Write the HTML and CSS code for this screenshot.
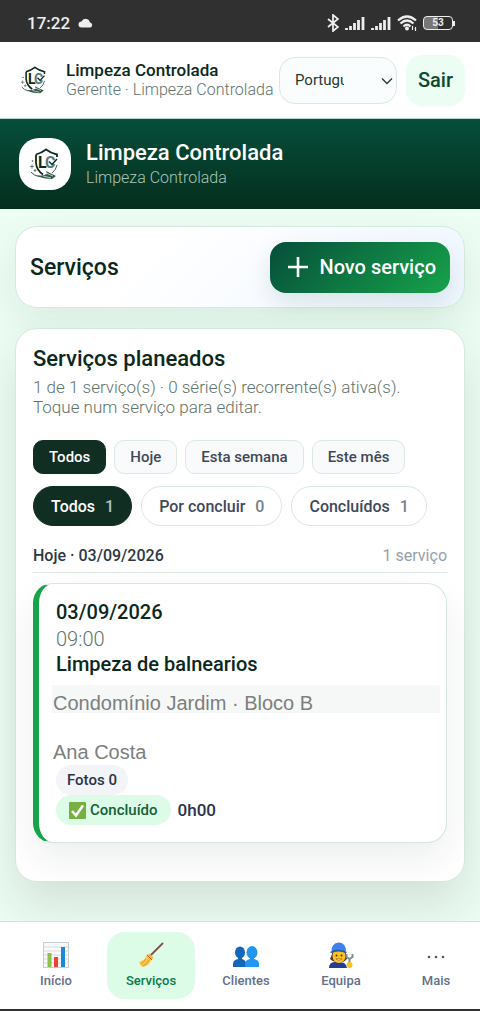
FILE: index.html
```
<!DOCTYPE html>
<html lang="pt">
<head>
	<meta charset="utf-8">
	<meta name="viewport" content="width=device-width, initial-scale=1">
	<title>Limpeza Controlada</title>
	<link rel="stylesheet" href="styles.css">
</head>
<body>
	<div class="status">
		<span class="time">17:22</span>
		<svg width="16" height="10" viewBox="0 0 16 10"><path d="M3.500 9.500a3 3 0 0 1 0-6A4.500 4.500 0 0 1 12 4.500a2.600 2.600 0 0 1 .5 5z" fill="#eee"/></svg>
		<div class="status-icons">
			<svg width="12" height="18" viewBox="0 0 12 18"><path d="M1 5l10 8-5 4V1l5 4L1 13" fill="none" stroke="#eee" stroke-width="1.800"/></svg>
			<svg width="20" height="14" viewBox="0 0 20 14"><path d="M1.500 14v-2M5.500 14v-4M9.500 14V7M13.500 14V4M18 14V1" stroke="#eee" stroke-width="2.800"/></svg>
			<svg width="20" height="14" viewBox="0 0 20 14"><path d="M1.500 14v-2M5.500 14v-4M9.500 14V7M13.500 14V4M18 14V1" stroke="#eee" stroke-width="2.800"/></svg>
			<svg width="20" height="16" viewBox="0 0 20 16"><path d="M1 5.500q9-8 18 0M3.500 8.500q6.500-6 13 0M6.500 11.500q3.500-3.500 7 0" fill="none" stroke="#eee" stroke-width="2.200"/><circle cx="10" cy="13.500" r="2" fill="#eee"/><path d="M15.500 11v4M18.500 12v4" stroke="#eee" stroke-width="1.200"/></svg>
			<span class="battery">53</span>
		</div>
	</div>

	<header class="topbar">
		<svg class="topbar-logo" width="28" height="30" viewBox="0 0 32 34">
			<path d="M7 7.500Q12.500 6 17 2.500Q21.500 6 28 7.500V10M7 7.500V16Q7.500 23 14 27.500" fill="none" stroke="#0d2b20" stroke-width="1.800"/>
			<text x="9" y="21">L<tspan class="logo-c" x="16">C</tspan></text>
			<path d="M20 14.500l3 3 5-5.500" fill="none" stroke="#0d2b20" stroke-width="1.500"/>
			<path d="M28 18Q27 23 23 26M2 25Q8 32 17 28" fill="none" stroke="#33584a"/>
			<path d="M7 28Q13 30 18 27L17 24L27 29L23 32Q13 32 7 28Z" fill="#33584a"/>
			<path d="M17 26l7 3M14 29l8 2" stroke="#fff" stroke-width=".7"/>
			<path d="M3 17.500v4M1 19.500h4M6 22v3M4.500 23.500h3" stroke="#33584a" stroke-width=".7"/>
			<circle cx="3.500" cy="14" r=".8" fill="#33584a"/>
		</svg>
		<div class="topbar-text">
			<strong>Limpeza Controlada</strong>
			<span>Gerente · Limpeza Controlada</span>
		</div>
		<div class="lang">
			<select aria-label="Idioma">
				<option>Português</option>
				<option>English</option>
			</select>
			<svg width="12" height="8" viewBox="0 0 12 8"><path d="M1 1.500l5 5 5-5" fill="none" stroke="#24372f" stroke-width="1.300"/></svg>
		</div>
		<button class="logout" type="button">Sair</button>
	</header>

	<section class="hero">
		<div class="hero-logo">
			<svg width="32" height="34" viewBox="0 0 32 34">
				<path d="M7 7.500Q12.500 6 17 2.500Q21.500 6 28 7.500V10M7 7.500V16Q7.500 23 14 27.500" fill="none" stroke="#0d2b20" stroke-width="1.800"/>
				<text x="9" y="21">L<tspan class="logo-c" x="16">C</tspan></text>
				<path d="M20 14.500l3 3 5-5.500" fill="none" stroke="#0d2b20" stroke-width="1.500"/>
				<path d="M28 18Q27 23 23 26M2 25Q8 32 17 28" fill="none" stroke="#33584a"/>
				<path d="M7 28Q13 30 18 27L17 24L27 29L23 32Q13 32 7 28Z" fill="#33584a"/>
				<path d="M17 26l7 3M14 29l8 2" stroke="#fff" stroke-width=".7"/>
				<path d="M3 17.500v4M1 19.500h4M6 22v3M4.500 23.500h3" stroke="#33584a" stroke-width=".7"/>
				<circle cx="3.500" cy="14" r=".8" fill="#33584a"/>
			</svg>
		</div>
		<div class="hero-text">
			<h1>Limpeza Controlada</h1>
			<p>Limpeza Controlada</p>
		</div>
	</section>

	<main>
		<section class="card title-card">
			<h2>Serviços</h2>
			<button class="new-btn" type="button">
				<svg width="20" height="20" viewBox="0 0 20 20"><path d="M10 0v20M0 10h20" stroke="#fff" stroke-width="2.600"/></svg>
				Novo serviço
			</button>
		</section>

		<section class="card list-card">
			<h3>Serviços planeados</h3>
			<p class="summary">1 de 1 serviço(s) · 0 série(s) recorrente(s) ativa(s). Toque num serviço para editar.</p>

			<div class="periods">
				<button class="active" type="button">Todos</button>
				<button type="button">Hoje</button>
				<button type="button">Esta semana</button>
				<button type="button">Este mês</button>
			</div>
			<div class="states">
				<button class="active" type="button">Todos <span>1</span></button>
				<button type="button">Por concluir <span>0</span></button>
				<button type="button">Concluídos <span>1</span></button>
			</div>

			<div class="day">
				<strong>Hoje · 03/09/2026</strong>
				<span>1 serviço</span>
			</div>

			<article class="service">
				<div class="date">03/09/2026</div>
				<div class="hour">09:00</div>
				<div class="name">Limpeza de balnearios</div>
				<div class="place">Condomínio Jardim · Bloco B</div>
				<div class="person">Ana Costa</div>
				<div class="tag-row"><span class="tag">Fotos 0</span></div>
				<div class="tag-row">
					<span class="tag done">
						<svg width="17" height="17" viewBox="0 0 17 17"><rect width="17" height="17" rx="1" fill="#76b043"/><path d="M3 9l4 4.500L14 3.500" fill="none" stroke="#fff" stroke-width="2.500"/></svg>
						Concluído
					</span>
					<span class="duration">0h00</span>
				</div>
			</article>
		</section>
	</main>

	<nav class="tabs">
		<a href="#inicio">
			<svg width="26" height="26" viewBox="0 0 26 26"><rect x=".5" y=".5" width="25" height="25" fill="#fafafa" stroke="#c5cdd0"/><path d="M1 5h24M1 9h24M1 13h24M1 17h24M1 21h24" stroke="#d5dcdf"/><path d="M6.500 11v14" stroke="#8bc34a" stroke-width="4"/><path d="M13 15v10" stroke="#f44336" stroke-width="4"/><path d="M20 5v20" stroke="#1e88d2" stroke-width="4"/></svg>
			Início
		</a>
		<a class="active" href="#servicos">
			<svg width="26" height="26" viewBox="0 0 26 26"><path d="M12 14L25 1" stroke="#795548" stroke-width="1.800"/><path d="M8.500 13.500l5 5Q11 24 4.500 25Q1.500 23 1 20Q7 18 8.500 13.500z" fill="#fdc84b"/><path d="M8.500 13.500l3-2 4 4-2 3z" fill="#f9bd3b"/><path d="M9 13l5 5" stroke="#d84b35"/><path d="M8 17Q6 20 3 22M11 18Q9 22 5 24" fill="none" stroke="#d99324"/></svg>
			Serviços
		</a>
		<a href="#clientes">
			<svg width="26" height="26" viewBox="0 0 26 26"><ellipse cx="7" cy="10.500" rx="5" ry="6" fill="#1565b8"/><path d="M0 25v-3q0-4 5-5v-2h4v2q4 1 4 5v3z" fill="#1565b8"/><ellipse cx="19" cy="10.500" rx="5.500" ry="6.500" fill="#2196f3"/><path d="M12 25v-3q0-4 5-5v-2h4v2q5 1 5 5v3z" fill="#2196f3"/></svg>
			Clientes
		</a>
		<a href="#equipa">
			<svg width="26" height="26" viewBox="0 0 26 26"><path d="M5 8q-1 5-3 9 3 3 8 3h5q4-2 4-4l-2-8z" fill="#543930"/><path d="M1 26q0-6 6-6h5q6 0 7 6z" fill="#243c91"/><ellipse cx="11" cy="14" rx="6.500" ry="7" fill="#fdc21b"/><path d="M3.500 10Q3 1 11 .5q7 .5 7 9Q10 6 3.500 10z" fill="#3d82e8"/><path d="M2 10Q10 5 19 10L18 11Q10 8 3 11z" fill="#205bb5"/><circle cx="8.500" cy="13.500" r="1" fill="#402d20"/><circle cx="13.500" cy="13.500" r="1" fill="#402d20"/><path d="M8 17q3 3 6 0z" fill="#fff" stroke="#713b20" stroke-width=".5"/><path d="M18.500 12v3l3 2 3-2v-3M21.500 17v8" fill="none" stroke="#78909c" stroke-width="2"/><circle cx="21.500" cy="23" r="3" fill="#fdc21b"/></svg>
			Equipa
		</a>
		<a href="#mais">
			<svg width="26" height="26" viewBox="0 0 26 26"><g fill="#505a65"><circle cx="6" cy="15" r="1.300"/><circle cx="13" cy="15" r="1.300"/><circle cx="20" cy="15" r="1.300"/></g></svg>
			Mais
		</a>
	</nav>
</body>
</html>
```
FILE: styles.css
```
* {
	margin: 0;
	padding: 0;
	box-sizing: border-box;
}
body {
	display: flex;
	flex-direction: column;
	min-height: 100vh;
	background: #ecfdf3;
	color: #0b281d;
	font-family: Roboto, "Liberation Sans", sans-serif;
}
button, select {
	border: 0;
	font-family: inherit;
	cursor: pointer;
}
svg {
	flex: none;
}
svg text {
	font-size: 16px;
	font-weight: 700;
	fill: #0d2b20;
}
svg .logo-c {
	fill: #5d7c70;
}
h1, h2, h3, strong {
	font-weight: 500;
}

.status {
	display: flex;
	align-items: center;
	height: 42px;
	padding: 3px 27px 0;
	background: #303030;
	color: #eee;
}
.time {
	margin-right: 8px;
	font-size: 17px;
	font-weight: 500;
}
.status-icons {
	display: flex;
	align-items: center;
	gap: 6px;
	margin-left: auto;
}
.battery {
	position: relative;
	width: 30px;
	border: 1px solid #eee;
	border-radius: 4px;
	background: linear-gradient(90deg, #777 50%, #303030 50%);
	font-size: 10px;
	font-weight: 700;
	line-height: 12px;
	text-align: center;
}
.battery::after {
	content: "";
	position: absolute;
	top: 4px;
	right: -3px;
	width: 2px;
	height: 5px;
	background: #eee;
}

.topbar {
	display: flex;
	align-items: center;
	height: 77px;
	padding: 0 15px 0 20px;
	border-bottom: 1px solid #b5d9c8;
	background: #fff;
}
.topbar-logo {
	margin-right: 18px;
}
.topbar-text {
	flex: 1;
	min-width: 0;
	white-space: nowrap;
	line-height: 20px;
}
.topbar-text strong, .topbar-text span {
	display: block;
}
.topbar-text strong {
	font-size: 17px;
}
.topbar-text span {
	color: #60736b;
	font-size: 16px;
	font-weight: 300;
}
.lang {
	position: relative;
	margin-right: 9px;
}
.lang select {
	display: block;
	width: 118px;
	height: 47px;
	padding: 0 52px 0 15px;
	border: 1px solid #dce7e2;
	border-radius: 16px;
	background: #f9fdfe;
	color: #24372f;
	font-size: 15px;
	appearance: none;
}
.lang svg {
	position: absolute;
	top: 20px;
	right: 4px;
	pointer-events: none;
}
.logout {
	width: 59px;
	height: 51px;
	border-radius: 16px;
	background: #ecfdf3;
	color: #0a4a33;
	font-size: 20px;
	font-weight: 500;
}

.hero {
	display: flex;
	align-items: center;
	gap: 15px;
	height: 90px;
	padding: 0 19px;
	background: linear-gradient(#064e3b, #052e1d);
	color: #fff;
}
.hero-logo {
	display: flex;
	align-items: center;
	justify-content: center;
	width: 52px;
	height: 52px;
	border-radius: 20px;
	background: #fff;
}
.hero-text {
	padding-top: 2px;
}
.hero h1 {
	font-size: 22px;
	line-height: 26px;
}
.hero p {
	color: #a9c7ba;
	font-size: 16px;
	font-weight: 300;
	line-height: 24px;
}

main {
	flex: 1;
	padding: 17px 15px 39px;
	overflow: hidden;
}
.card {
	border: 1px solid #d5eadf;
	border-radius: 22px;
	background: #fff;
	box-shadow: 0 16px 40px rgba(20, 60, 35, .08);
}
.title-card {
	display: flex;
	align-items: center;
	justify-content: space-between;
	height: 82px;
	margin-bottom: 20px;
	padding: 0 14px;
	background: linear-gradient(135deg, #fff 30%, #eff6ff);
}
.title-card h2 {
	font-size: 23px;
}
.new-btn {
	display: flex;
	align-items: center;
	gap: 11px;
	height: 51px;
	padding: 0 14px 0 18px;
	border-radius: 16px;
	background: linear-gradient(135deg, #064e3b, #16a34a);
	box-shadow: 0 10px 24px rgba(6, 78, 59, .12);
	color: #fff;
	font-size: 20px;
	font-weight: 500;
}

.list-card {
	padding: 16px 17px 38px;
	box-shadow: 0 24px 48px rgba(30, 35, 32, .12);
}
.list-card h3 {
	margin-bottom: 5px;
	font-size: 22px;
	line-height: 27px;
}
.summary {
	color: #60736b;
	font-size: 17px;
	font-weight: 300;
	line-height: 20px;
}
.periods, .states {
	display: flex;
}
.periods {
	gap: 8px;
	margin: 23px 0 12px;
}
.periods button, .states button {
	border: 1px solid #dce8e2;
	color: #3f4858;
	font-weight: 500;
	white-space: nowrap;
}
.periods button {
	height: 34px;
	padding: 0 15px;
	border-radius: 10px;
	background: #f8fafc;
	font-size: 15px;
}
.states {
	gap: 9px;
}
.states button {
	height: 40px;
	padding: 0 17px;
	border-radius: 20px;
	background: #fff;
	font-size: 16px;
}
.states span {
	margin-left: 6px;
	opacity: .7;
}
.periods .active, .states .active {
	border-color: #102e22;
	background: #102e22;
	color: #fff;
}
.day {
	display: flex;
	justify-content: space-between;
	margin: 19px 0 10px;
	padding-bottom: 5px;
	border-bottom: 1px solid #dfe7e5;
	color: #2c3846;
	font-size: 16px;
	line-height: 22px;
}
.day span {
	color: #94a0ae;
}

.service {
	padding: 16px 6px 17px 17px;
	border: 1px solid #d5e6df;
	border-left: 6px solid #16a34a;
	border-radius: 20px;
	background: #fff;
	box-shadow: 0 16px 36px rgba(30, 35, 32, .08);
}
.date, .name {
	font-size: 20px;
	font-weight: 500;
	line-height: 24px;
}
.hour {
	color: #60736b;
	font-size: 20px;
	font-weight: 300;
	line-height: 30px;
}
.name {
	line-height: 20px;
}
.place, .person {
	margin-left: -4px;
	padding-left: 1px;
	color: #7b807d;
	font-family: "Liberation Sans", sans-serif;
	font-size: 20px;
}
.place {
	height: 28px;
	margin-top: 11px;
	padding-top: 4px;
	background: #f6f7f7;
	line-height: 28px;
}
.person {
	margin-top: 27px;
	line-height: 25px;
}
.tag-row {
	display: flex;
	align-items: center;
	gap: 7px;
}
.tag {
	display: flex;
	align-items: center;
	gap: 4px;
	height: 30px;
	padding: 0 11px;
	border-radius: 15px;
	background: #f3f4f8;
	color: #27344a;
	font-size: 15px;
	font-weight: 500;
}
.done {
	padding: 0 13px;
	background: #dcfce7;
	color: #15613a;
}
.duration {
	color: #27344a;
	font-size: 17px;
	font-weight: 500;
}

.tabs {
	display: grid;
	grid-template-columns: repeat(5, 1fr);
	gap: 7px;
	padding: 10px 0 10px 12px;
	border-top: 1px solid #cfe5da;
	border-bottom: 2px solid #303030;
	background: #fff;
}
.tabs a {
	display: flex;
	flex-direction: column;
	align-items: center;
	gap: 4px;
	height: 67px;
	padding-top: 10px;
	border-radius: 18px;
	color: #64708a;
	font-size: 13px;
	font-weight: 500;
	line-height: 18px;
	text-decoration: none;
}
.tabs .active {
	background: #dcfce7;
	color: #087a4b;
}
```
